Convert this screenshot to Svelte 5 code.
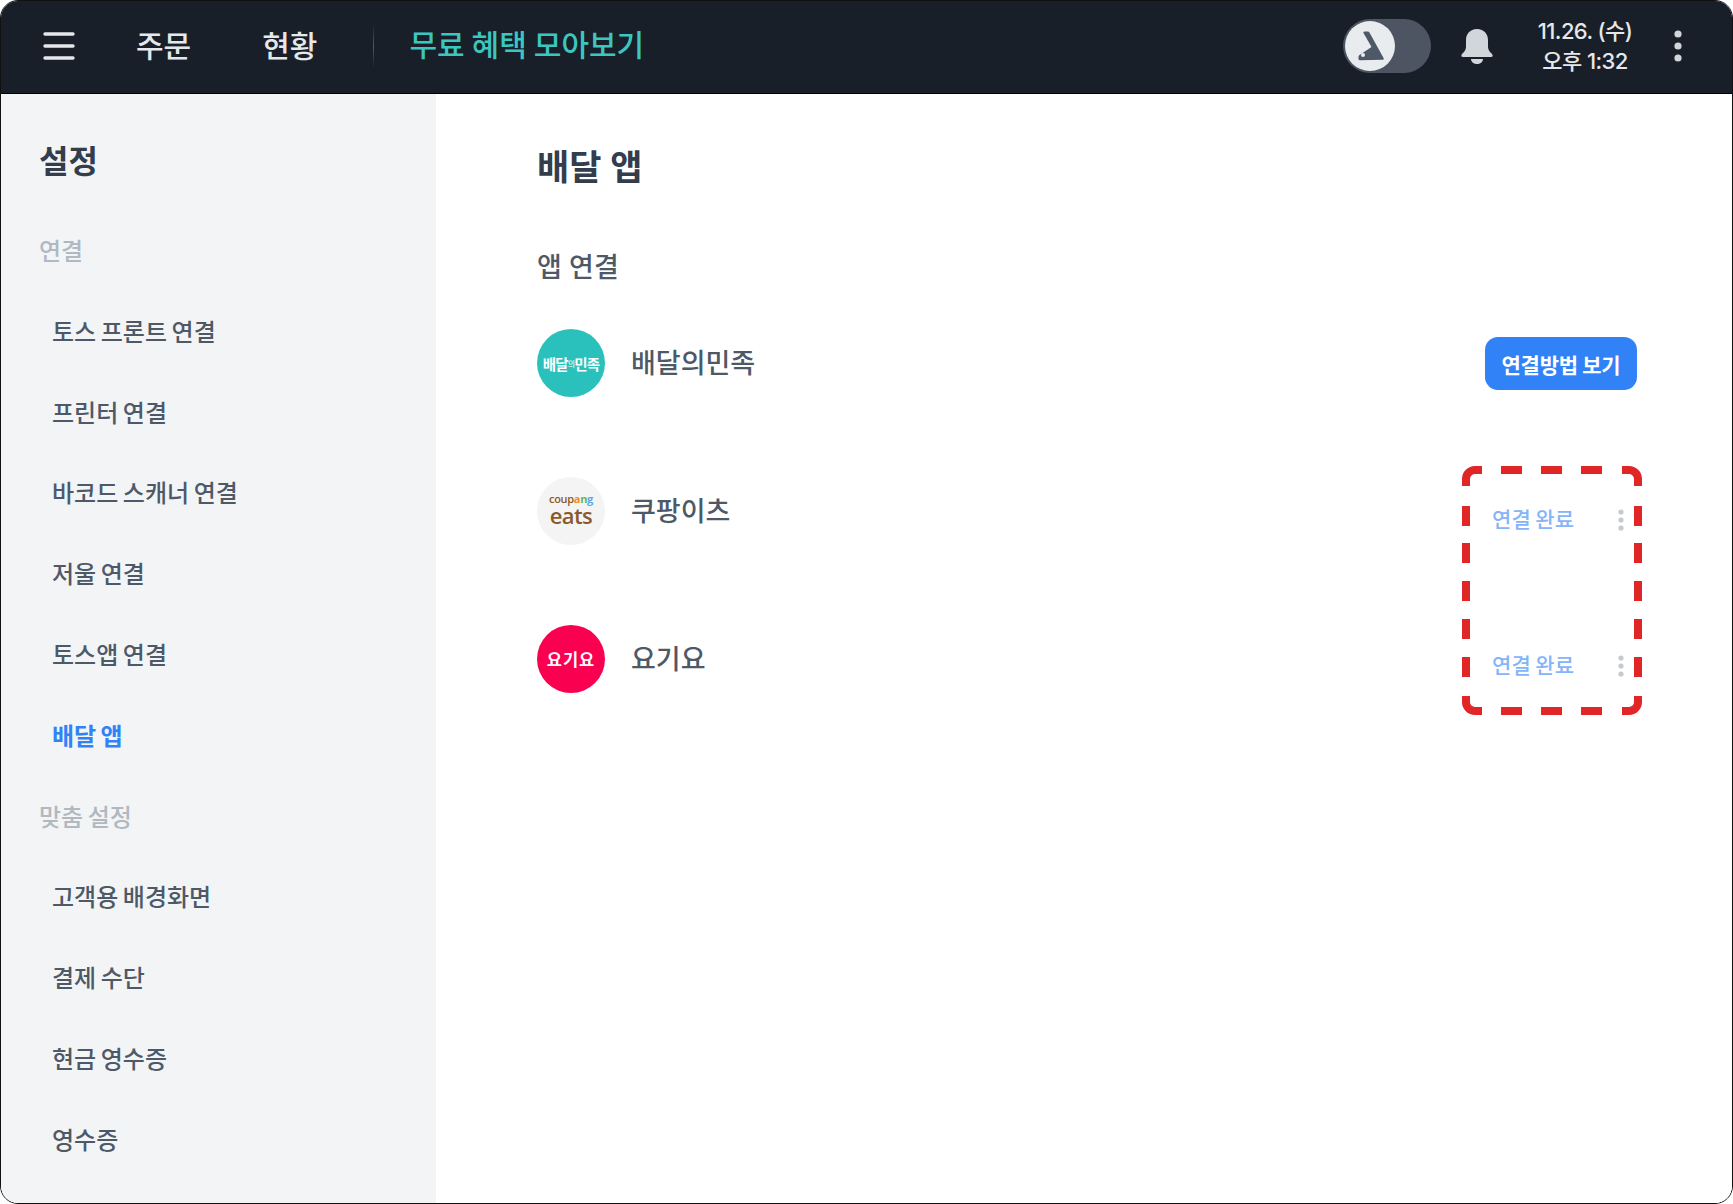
<script>
	const sidebar = [
		{ label: '연결', section: true },
		{ label: '토스 프론트 연결' },
		{ label: '프린터 연결' },
		{ label: '바코드 스캐너 연결' },
		{ label: '저울 연결' },
		{ label: '토스앱 연결' },
		{ label: '배달 앱', active: true },
		{ label: '맞춤 설정', section: true },
		{ label: '고객용 배경화면' },
		{ label: '결제 수단' },
		{ label: '현금 영수증' },
		{ label: '영수증' }
	];
</script>

<div class="window">
	<header class="topbar">
		<svg class="hamburger" width="32" height="28" viewBox="0 0 32 28">
			<path d="M2 2h28M2 14h28M2 26h28" stroke="#e5e8eb" stroke-width="3.4" stroke-linecap="round" />
		</svg>
		<a class="nav first">주문</a>
		<a class="nav second">현황</a>
		<span class="divider"></span>
		<a class="promo">무료 혜택 모아보기</a>

		<div class="right">
			<div class="toggle">
				<span class="knob">
					<svg width="48" height="48" viewBox="0 0 48 48">
						<path d="M18.5 9.5h3.5a1.5 1.5 0 0 1 1.3.8l14.4 26a1 1 0 0 1-.9 1.5l-22.8.5a1.5 1.5 0 0 1-1.5-1.5v-2a2 2 0 0 1 1-1.7l12-8.1-8-14a1 1 0 0 1 1-1.5z" fill="#4e5968" />
						<circle cx="17" cy="33" r="2" fill="#e9ecef" />
					</svg>
				</span>
			</div>
			<svg class="bell" width="34" height="36" viewBox="0 0 34 36">
				<path d="M17 1c-7 0-11 5-11 11v7c0 3-2 5-4 7-1 1-1 3 1 3h28c2 0 2-2 1-3-2-2-4-4-4-7v-7c0-6-4-11-11-11z" fill="#d1d6db" />
				<path d="M11 31h12c0 3-3 5-6 5s-6-2-6-5z" fill="#d1d6db" />
			</svg>
			<div class="clock">
				<div>11.26. (수)</div>
				<div>오후 1:32</div>
			</div>
			<svg class="more" width="10" height="32" viewBox="0 0 10 32">
				<circle cx="5" cy="4" r="3.6" fill="#d1d6db" />
				<circle cx="5" cy="16" r="3.6" fill="#d1d6db" />
				<circle cx="5" cy="28" r="3.6" fill="#d1d6db" />
			</svg>
		</div>
	</header>

	<div class="body">
		<aside class="sidebar">
			<h2>설정</h2>
			{#each sidebar as item}
				<div class="row" class:section={item.section} class:active={item.active}>{item.label}</div>
			{/each}
		</aside>

		<main class="content">
			<h1>배달 앱</h1>
			<h3>앱 연결</h3>

			<div class="app">
				<span class="logo baemin">배달<small>의</small>민족</span>
				<span class="name">배달의민족</span>
				<button class="guide">연결방법 보기</button>
			</div>

			<div class="app">
				<span class="logo coupang">
					<span class="coupang-word">coup<b class="o">a</b><b class="g">n</b><b class="b">g</b></span>
					<span class="eats">eats</span>
				</span>
				<span class="name">쿠팡이츠</span>
				<div class="status">
					<span>연결 완료</span>
					<svg width="6" height="22" viewBox="0 0 6 22">
						<circle cx="3" cy="3" r="2.6" fill="#c5cad0" />
						<circle cx="3" cy="11" r="2.6" fill="#c5cad0" />
						<circle cx="3" cy="19" r="2.6" fill="#c5cad0" />
					</svg>
				</div>
			</div>

			<div class="app">
				<span class="logo yogiyo">요기요</span>
				<span class="name">요기요</span>
				<div class="status last">
					<span>연결 완료</span>
					<svg width="6" height="22" viewBox="0 0 6 22">
						<circle cx="3" cy="3" r="2.6" fill="#c5cad0" />
						<circle cx="3" cy="11" r="2.6" fill="#c5cad0" />
						<circle cx="3" cy="19" r="2.6" fill="#c5cad0" />
					</svg>
				</div>
			</div>

			<!-- red dashed callout over the status column -->
			<svg class="callout" width="180" height="249" viewBox="0 0 180 249">
				<path
					d="M4 20V13a9 9 0 0 1 9-9H20M39 4H60M79 4H100M119 4H140M160 4H167a9 9 0 0 1 9 9V20
					M176 40V60M176 77V97M176 115V135M176 153V173M176 191V211M176 230V236a9 9 0 0 1-9 9H160
					M140 245H119M100 245H79M60 245H39M20 245H13a9 9 0 0 1-9-9V230
					M4 211V191M4 173V153M4 135V115M4 97V77M4 60V40"
					fill="none"
					stroke="#e02626"
					stroke-width="8"
				/>
			</svg>
		</main>
	</div>
</div>

<style>
	:global(body) {
		margin: 0;
		background: #fff;
	}

	.window {
		width: 1733px;
		height: 1204px;
		box-sizing: border-box;
		border: 1px solid #111;
		border-radius: 18px;
		overflow: hidden;
		display: flex;
		flex-direction: column;
		font-family: Inter, 'Noto Sans CJK KR', sans-serif;
		color: #333d4b;
	}

	/* Top bar */
	.topbar {
		flex: none;
		height: 93px;
		box-sizing: border-box;
		border-bottom: 1px solid #000;
		background: #191f28;
		display: flex;
		align-items: center;
		padding: 0 0 3px 42px;
		color: #e5e8eb;
	}

	.nav {
		font-size: 30px;
		font-weight: 500;
		line-height: 40px;
	}

	.nav.first {
		margin-left: 61px;
	}

	.nav.second {
		margin-left: 71px;
	}

	.divider {
		width: 1px;
		height: 44px;
		margin-left: 56px;
		background: linear-gradient(transparent, #4e5968 50%, transparent);
	}

	.promo {
		margin-left: 35px;
		margin-bottom: 6px;
		font-size: 30px;
		font-weight: 500;
		word-spacing: -1px;
		color: #3cc6c0;
	}

	.right {
		margin-left: auto;
		display: flex;
		align-items: center;
	}

	.toggle {
		width: 88px;
		height: 54px;
		border-radius: 27px;
		background: #4e5562;
		display: flex;
		align-items: center;
		padding-left: 2px;
		box-sizing: border-box;
	}

	.knob {
		width: 50px;
		height: 50px;
		border-radius: 50%;
		background: #e9ecef;
		display: flex;
		align-items: center;
		justify-content: center;
	}

	.bell {
		margin-left: 29px;
	}

	.clock {
		margin-left: 39px;
		width: 104px;
		text-align: center;
		font-size: 22px;
		font-weight: 500;
		line-height: 30px;
		letter-spacing: -0.6px;
	}

	.more {
		margin-left: 36px;
		margin-right: 49px;
	}

	.body {
		flex: 1;
		display: flex;
		min-height: 0;
	}

	/* Sidebar */
	.sidebar {
		flex: none;
		width: 435px;
		box-sizing: border-box;
		background: #f2f4f6;
		padding-top: 45px;
		overflow: hidden;
	}

	.sidebar h2 {
		margin: 0 0 27px 38px;
		font-size: 32px;
		font-weight: 600;
		line-height: 46px;
	}

	.row {
		height: 80.8px;
		line-height: 80.8px;
		padding-left: 51px;
		font-size: 24px;
		font-weight: 500;
		word-spacing: -1.8px;
		color: #4e5968;
	}

	.row.section {
		padding-left: 38px;
		color: #b0b8c1;
	}

	.row.active {
		color: #3182f6;
		font-weight: 600;
	}

	/* Content */
	.content {
		position: relative;
		flex: 1;
		padding: 48px 95px 0 101px;
		background: #fff;
	}

	h1 {
		margin: 0;
		font-size: 35px;
		font-weight: 600;
		line-height: 50px;
	}

	h3 {
		margin: 57px 0 0;
		font-size: 27px;
		font-weight: 500;
		line-height: 38px;
		color: #4e5968;
	}

	.app {
		display: flex;
		align-items: flex-start;
		height: 148px;
	}

	.app:first-of-type {
		margin-top: 42px;
	}

	.logo {
		flex: none;
		width: 68px;
		height: 68px;
		border-radius: 50%;
		display: flex;
		align-items: center;
		justify-content: center;
	}

	.baemin {
		background: #2ac1bc;
		color: #fff;
		font-size: 14.5px;
		font-weight: 700;
		letter-spacing: -0.8px;
		white-space: nowrap;
	}

	.baemin small {
		font-size: 8px;
		font-weight: 400;
	}

	.coupang {
		background: #f4f4f4;
		flex-direction: column;
		padding-bottom: 4px;
		box-sizing: border-box;
		font-family: 'Open Sans', sans-serif;
		color: #8a5a2b;
	}

	.coupang-word {
		font-size: 11px;
		line-height: 11px;
		font-weight: 600;
		letter-spacing: -0.3px;
	}

	.coupang-word b {
		font-weight: 700;
	}

	.o {
		color: #f08a24;
	}

	.g {
		color: #5cb85c;
	}

	.b {
		color: #5aa9e6;
	}

	.eats {
		font-size: 22px;
		line-height: 22px;
		font-weight: 600;
		letter-spacing: -0.6px;
	}

	.yogiyo {
		background: #fa0050;
		color: #fff;
		font-size: 16.5px;
		font-weight: 700;
		letter-spacing: 1px;
	}

	.name {
		margin-left: 26px;
		font-size: 27px;
		font-weight: 500;
		line-height: 70px;
		color: #4e5968;
	}

	.guide {
		margin-left: auto;
		margin-top: 8px;
		width: 152px;
		height: 53px;
		border: none;
		border-radius: 13px;
		background: #3182f6;
		color: #fff;
		font: inherit;
		font-size: 21px;
		font-weight: 700;
		letter-spacing: -0.3px;
	}

	.status {
		margin-left: auto;
		margin-top: 27px;
		margin-right: 13px;
		display: flex;
		align-items: center;
		gap: 44px;
		font-size: 21px;
		font-weight: 500;
		line-height: 32px;
		word-spacing: -1px;
		color: #85b4f9;
	}

	.status.last {
		margin-top: 25px;
	}

	.callout {
		position: absolute;
		left: 1026px;
		top: 372px;
	}
</style>
